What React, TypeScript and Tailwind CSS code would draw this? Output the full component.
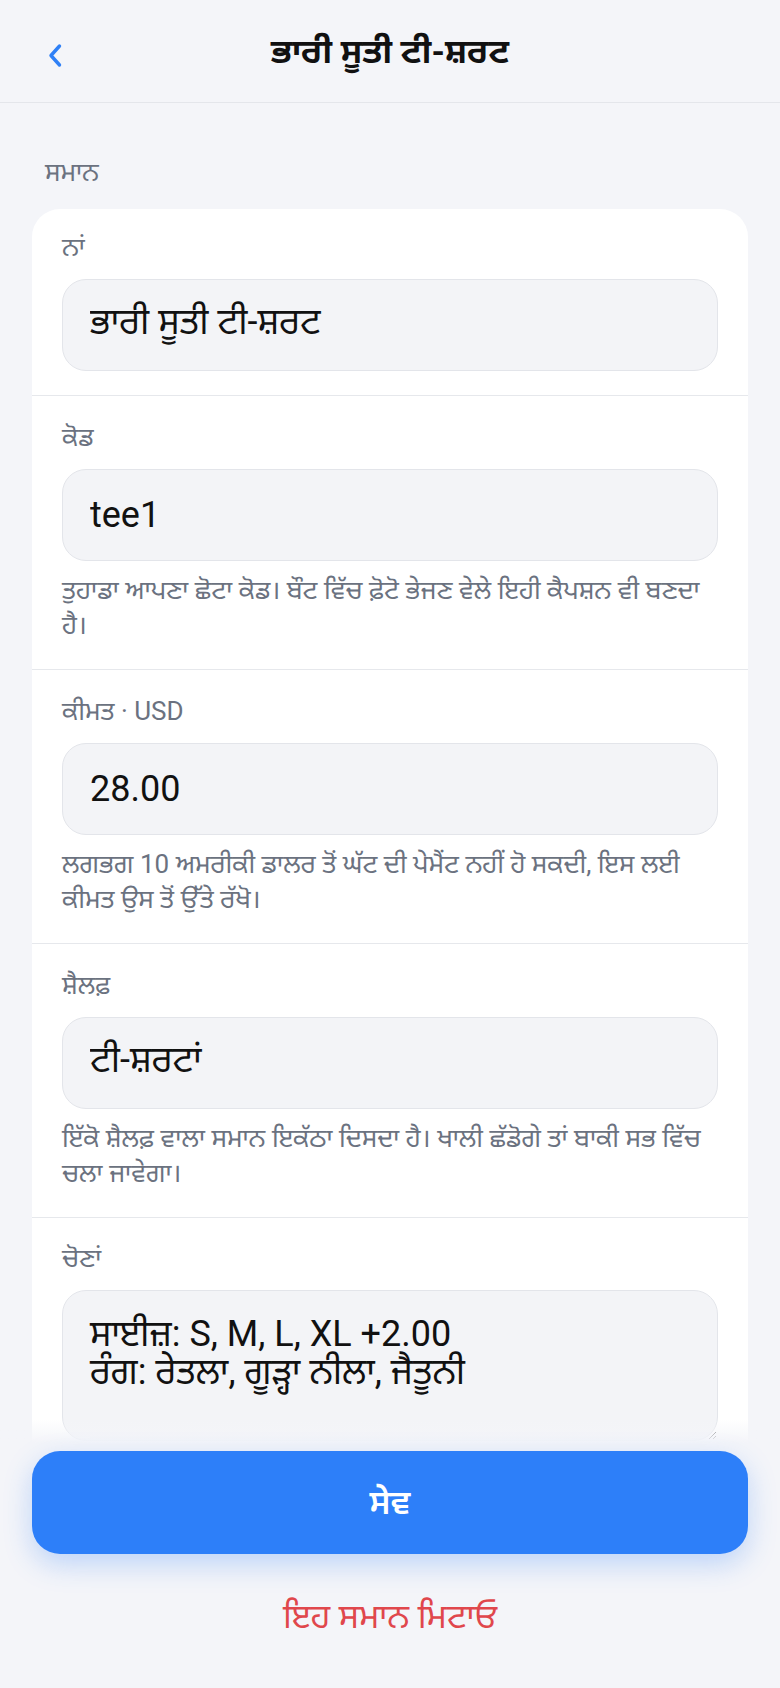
import React from "react";

const FONT = { fontFamily: "Roboto, 'Noto Sans Gurmukhi', 'Noto Sans', sans-serif" };

function Field({
  label,
  value,
  help,
  first,
}: {
  label: string;
  value: string;
  help?: string;
  first?: boolean;
}) {
  return (
    <div
      className={`border-b border-[#e6e8ec] px-[30px] ${first ? "pt-5 pb-6" : "pt-[23px]"} ${
        help ? "pb-[26px]" : ""
      }`}
    >
      <div className="text-[26px] leading-[36px] text-[#6b7280]">{label}</div>
      <input
        readOnly
        value={value}
        className="mt-3.5 block h-[92px] w-full rounded-[24px] border border-[#e3e5ea] bg-[#f3f4f7] px-[27px] text-[36px] text-[#111111] outline-none"
        style={FONT}
      />
      {help && (
        <div className="mt-3 text-[26px] leading-[35px] text-[#6b7280]">{help}</div>
      )}
    </div>
  );
}

export default function App() {
  return (
    <div
      className="relative h-[1688px] w-[780px] overflow-hidden bg-[#f4f5f9]"
      style={FONT}
    >
      <header className="flex h-[103px] items-center border-b border-[#e4e6eb] px-[46px]">
        <svg width="18" height="26" viewBox="0 0 18 26" className="mt-[10px] shrink-0">
          <path
            d="M13.5 3 L5 12.5 L13.5 22"
            fill="none"
            stroke="#2f80f6"
            strokeWidth="3.4"
            strokeLinecap="round"
            strokeLinejoin="round"
          />
        </svg>
        <h1 className="flex-1 pr-[18px] text-center text-[34px] font-bold leading-[44px] text-[#111111]">
          ਭਾਰੀ ਸੂਤੀ ਟੀ-ਸ਼ਰਟ
        </h1>
      </header>

      <main className="px-8">
        <div className="pl-[13px] pt-[51px] text-[26px] leading-[36px] text-[#6b7280]">ਸਮਾਨ</div>
        <div className="mt-[19px] overflow-hidden rounded-[28px] bg-white">
          <Field first label="ਨਾਂ" value="ਭਾਰੀ ਸੂਤੀ ਟੀ-ਸ਼ਰਟ" />
          <Field
            label="ਕੋਡ"
            value="tee1"
            help="ਤੁਹਾਡਾ ਆਪਣਾ ਛੋਟਾ ਕੋਡ। ਬੌਟ ਵਿੱਚ ਫ਼ੋਟੋ ਭੇਜਣ ਵੇਲੇ ਇਹੀ ਕੈਪਸ਼ਨ ਵੀ ਬਣਦਾ ਹੈ।"
          />
          <Field
            label="ਕੀਮਤ · USD"
            value="28.00"
            help="ਲਗਭਗ 10 ਅਮਰੀਕੀ ਡਾਲਰ ਤੋਂ ਘੱਟ ਦੀ ਪੇਮੈਂਟ ਨਹੀਂ ਹੋ ਸਕਦੀ, ਇਸ ਲਈ ਕੀਮਤ ਉਸ ਤੋਂ ਉੱਤੇ ਰੱਖੋ।"
          />
          <Field
            label="ਸ਼ੈਲਫ਼"
            value="ਟੀ-ਸ਼ਰਟਾਂ"
            help="ਇੱਕੋ ਸ਼ੈਲਫ਼ ਵਾਲਾ ਸਮਾਨ ਇਕੱਠਾ ਦਿਸਦਾ ਹੈ। ਖਾਲੀ ਛੱਡੋਗੇ ਤਾਂ ਬਾਕੀ ਸਭ ਵਿੱਚ ਚਲਾ ਜਾਵੇਗਾ।"
          />
          <div className="px-[30px] pt-[22px] pb-16">
            <div className="text-[26px] leading-[36px] text-[#6b7280]">ਚੋਣਾਂ</div>
            <textarea
              readOnly
              value={"ਸਾਈਜ਼: S, M, L, XL +2.00\nਰੰਗ: ਰੇਤਲਾ, ਗੂੜ੍ਹਾ ਨੀਲਾ, ਜੈਤੂਨੀ"}
              className="mt-3.5 block h-[151px] w-full resize-y rounded-[24px] border border-[#e3e5ea] bg-[#f3f4f7] px-[27px] pt-[24px] text-[36px] leading-[38px] text-[#111111] outline-none"
              style={FONT}
            />
          </div>
        </div>
      </main>

      <div className="absolute inset-x-0 bottom-0">
        <div className="h-6 bg-gradient-to-b from-[#f4f5f9]/0 to-[#f4f5f9]" />
        <div className="bg-[#f4f5f9] px-8 pb-[52px] pt-2">
          <button className="flex h-[103px] w-full items-center justify-center rounded-[28px] bg-[#2d7ff9] text-[34px] font-semibold text-white shadow-[0_10px_28px_rgba(45,127,249,0.28)]">
            ਸੇਵ
          </button>
          <div className="mt-[42px] text-center text-[34px] leading-[40px] text-[#e0474c]">
            ਇਹ ਸਮਾਨ ਮਿਟਾਓ
          </div>
        </div>
      </div>
    </div>
  );
}
